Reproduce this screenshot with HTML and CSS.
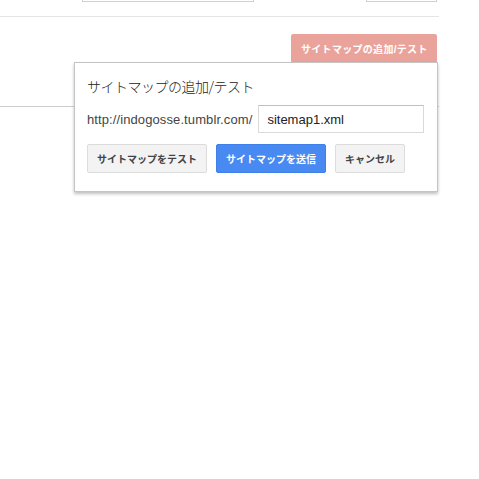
FILE: index.html
```html
<!DOCTYPE html>
<html lang="ja">
<head>
<meta charset="utf-8">
<title>サイトマップの追加/テスト</title>
<link rel="stylesheet" href="styles.css">
</head>
<body>
<div class="page">
  <div class="topbar">
    <div class="topbox topbox-search"></div>
    <div class="topbox topbox-small"></div>
  </div>
  <div class="actions">
    <button class="btn btn-red" type="button">サイトマップの追加/テスト</button>
  </div>
  <div class="rule"></div>

  <div class="dialog">
    <div class="dialog-title">サイトマップの追加/テスト</div>
    <div class="url-row">
      <span class="url-label">http://indogosse.tumblr.com/</span>
      <input class="url-input" type="text" value="sitemap1.xml">
    </div>
    <div class="btn-row">
      <button class="btn btn-gray" type="button">サイトマップをテスト</button>
      <button class="btn btn-blue" type="button">サイトマップを送信</button>
      <button class="btn btn-gray" type="button">キャンセル</button>
    </div>
  </div>
</div>
</body>
</html>
```
FILE: styles.css
```css
html, body {
  margin: 0;
  padding: 0;
  background: #fff;
}
body {
  min-height: 479px;
  font-family: "Liberation Sans", Arial, "Noto Sans CJK JP", sans-serif;
  color: #222;
}
.page {
  position: relative;
  width: 439px;
  min-height: 479px;
}
.topbar {
  display: flex;
  height: 16px;
  border-bottom: 1px solid #e5e5e5;
}
.topbox {
  height: 1px;
  border: 1px solid #d0d0d0;
  border-top: none;
  background: #fff;
}
.topbox-search {
  margin-left: 82px;
  width: 170px;
}
.topbox-small {
  margin-left: auto;
  margin-right: 2px;
  width: 69px;
}
.actions {
  display: flex;
  justify-content: flex-end;
  padding-top: 17px;
  padding-right: 2px;
}
.btn {
  font-family: "Liberation Sans", Arial, "Noto Sans CJK JP", sans-serif;
  font-size: 10px;
  font-weight: bold;
  height: 29px;
  padding: 0 9px;
  border-radius: 2px;
  border: 1px solid transparent;
  cursor: default;
  white-space: nowrap;
}
.btn-red {
  background: #eaa39b;
  color: #fff;
  border-color: #eaa39b;
  width: 146px;
  letter-spacing: 0.3px;
}
.rule {
  margin-top: 43px;
  width: 100%;
  border-top: 1px solid #cccccc;
}
.dialog {
  position: absolute;
  z-index: 2;
  left: 74px;
  top: 62px;
  width: 364px;
  box-sizing: border-box;
  background: #fff;
  border: 1px solid #c4c4c4;
  box-shadow: 0 2px 3px rgba(0, 0, 0, 0.25);
  padding: 13px 13px 18px 12px;
}
.dialog-title {
  font-family: "Noto Sans CJK JP", sans-serif;
  font-size: 14px;
  line-height: 20px;
  color: #222;
  font-weight: 300;
  letter-spacing: -0.5px;
}
.url-row {
  display: flex;
  align-items: center;
  gap: 6px;
  margin-top: 9px;
}
.url-label {
  font-size: 13px;
  letter-spacing: 0.1px;
  color: #444;
  white-space: nowrap;
}
.url-input {
  width: 166px;
  height: 28px;
  box-sizing: border-box;
  border: 1px solid #d9d9d9;
  border-top-color: #c0c0c0;
  padding: 0 8px;
  font-family: "Liberation Sans", Arial, sans-serif;
  font-size: 13px;
  color: #222;
  margin: 0;
}
.btn-row {
  display: flex;
  gap: 9px;
  margin-top: 11px;
}
.btn-gray {
  background: #f3f3f3;
  border-color: #dcdcdc;
  color: #444;
}
.btn-blue {
  background: #4889f2;
  border-color: #3f7fe8;
  color: #fff;
}
```
